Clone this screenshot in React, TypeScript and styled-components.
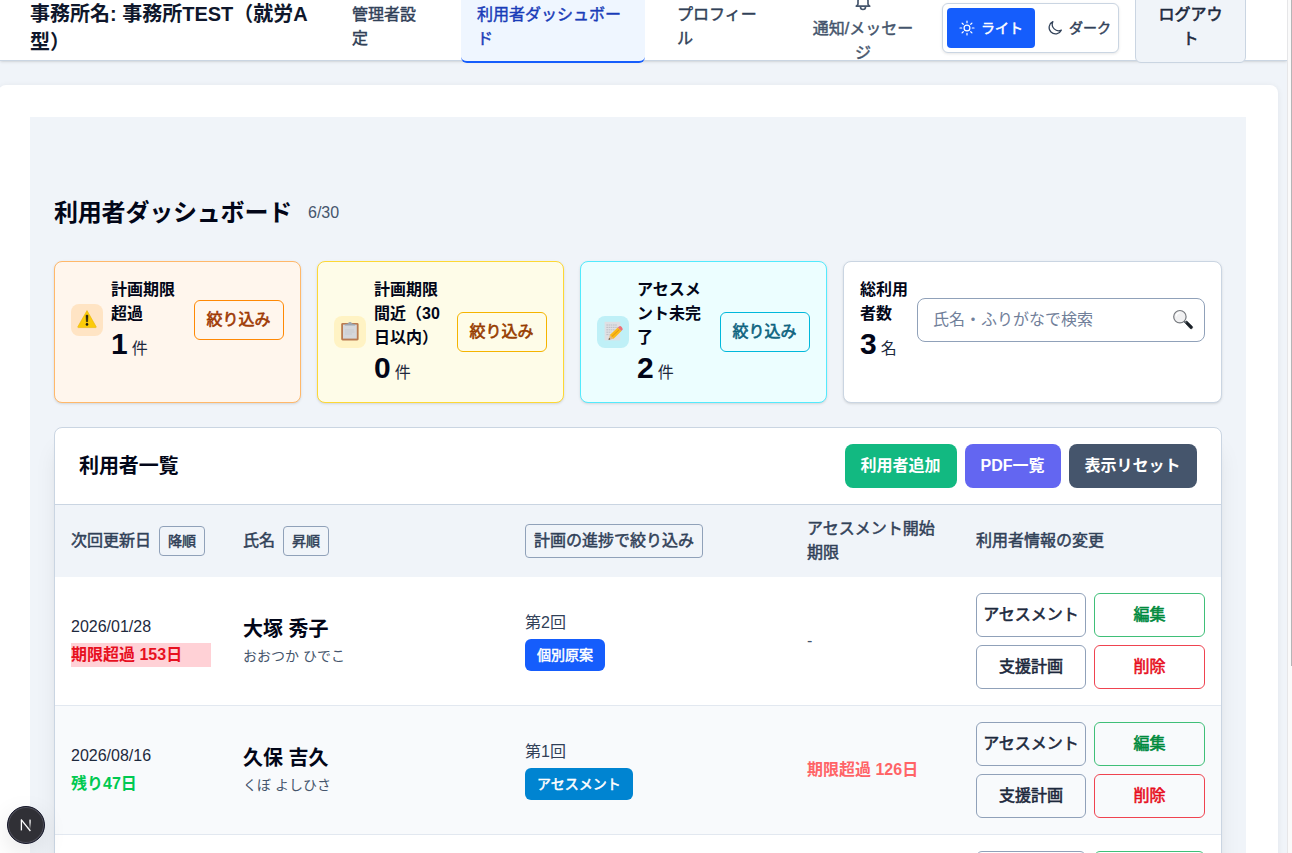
import React from 'react';
import styled, { createGlobalStyle } from 'styled-components';

const GlobalStyle = createGlobalStyle`
  *, *::before, *::after { box-sizing: border-box; }
  body {
    margin: 0;
    overflow: hidden;
    background: #f0f4f9;
    color: #020618;
    font: 400 16px/24px "Liberation Sans", "Noto Sans CJK JP", sans-serif;
  }
  button, input { font: inherit; color: inherit; margin: 0; }
  h1, h2, p { margin: 0; }
  svg { display: block; flex: none; }
`;

const Window = styled.div`
  display: flex;
  height: 853px;
  overflow: hidden;
`;

const Page = styled.div`
  width: 1287px;
  flex: none;
  overflow: hidden;
`;

const ScrollTrack = styled.div`
  flex: 1;
  display: flex;
  justify-content: flex-end;
  background: #fafafa;
  border-left: 1px solid #e6e6e8;
`;

const ScrollThumb = styled.div`
  width: 1px;
  height: 666px;
  background: #b5b5b7;
`;

const Header = styled.header`
  display: flex;
  align-items: center;
  height: 65px;
  margin-top: -4px;
  padding-left: 30px;
  background: #fff;
  border-bottom: 1px solid #cad5e2;
  box-shadow: 0 1px 3px rgba(0, 0, 0, 0.1), 0 1px 2px -1px rgba(0, 0, 0, 0.1);
  white-space: nowrap;
`;

const OfficeName = styled.div`
  width: 306px;
  font-size: 20px;
  line-height: 28px;
  font-weight: 600;
  color: #0f172b;
`;

const Nav = styled.nav`
  display: flex;
  align-items: center;
  gap: 16px;
`;

const NavItem = styled.a<{ $width: number; $active?: boolean }>`
  width: ${(p) => p.$width}px;
  height: 70px;
  padding: 10px 16px 0;
  -webkit-text-stroke: 0.45px currentColor;
  color: ${(p) => (p.$active ? '#193cb8' : '#314158')};
  background: ${(p) => (p.$active ? '#eff6ff' : 'transparent')};
  border-bottom: 2px solid ${(p) => (p.$active ? '#155dfc' : 'transparent')};
  border-radius: 6px;
`;

const Notice = styled.a`
  display: flex;
  flex-direction: column;
  align-items: center;
  gap: 5px;
  width: 134px;
  padding-top: 1px;
  text-align: center;
  color: #45556c;
  span { -webkit-text-stroke: 0.45px currentColor; }
`;

const ThemeSwitch = styled.div`
  display: flex;
  width: 177px;
  height: 50px;
  margin-left: 12px;
  padding: 4px;
  background: #fff;
  border: 1px solid #cad5e2;
  border-radius: 6px;
  box-shadow: 0 1px 3px rgba(0, 0, 0, 0.1);
`;

const ThemeOption = styled.button<{ $active?: boolean }>`
  display: flex;
  align-items: center;
  gap: 6px;
  width: ${(p) => (p.$active ? 88 : 79)}px;
  height: 40px;
  padding: 0 0 0 12px;
  border: 0;
  border-radius: 4px;
  font-size: 14px;
  -webkit-text-stroke: 0.5px currentColor;
  background: ${(p) => (p.$active ? '#155dfc' : 'transparent')};
  color: ${(p) => (p.$active ? '#fff' : '#314158')};
`;

const Logout = styled.button`
  width: 111px;
  height: 70px;
  margin-left: 16px;
  padding: 0 0 2px;
  border: 1px solid #cad5e2;
  border-radius: 6px;
  background: #f0f4f9;
  color: #1d293d;
  -webkit-text-stroke: 0.6px currentColor;
`;

const Shell = styled.main`
  width: 1280px;
  height: 900px;
  margin: 24px 0 0 -2px;
  padding: 32px;
  background: #fff;
  border-radius: 8px;
  box-shadow: 0 1px 6px rgba(15, 23, 43, 0.07);
`;

const Dashboard = styled.div`
  height: 860px;
  padding: 78px 24px 0;
  overflow: hidden;
  background: #f0f4f9;
`;

const TitleRow = styled.div`
  display: flex;
  align-items: center;
  gap: 15px;
  height: 36px;
  margin-bottom: 30px;
  color: #45556c;
`;

const Title = styled.h1`
  font-size: 24px;
  line-height: 36px;
  font-weight: 600;
  letter-spacing: -0.2px;
  color: #020618;
  width: 239px;
  white-space: nowrap;
`;

const Stats = styled.div`
  display: grid;
  grid-template-columns: 247px 247px 247px 379px;
  gap: 16px;
  margin-bottom: 24px;
`;

const tones = {
  orange: { bg: '#fff6ed', border: '#ffb86a', icon: '#ffe4c4', line: '#ff8904', text: '#9f3a05' },
  yellow: { bg: '#fefce8', border: '#fdd835', icon: '#fff3c4', line: '#f5b400', text: '#973c00' },
  cyan: { bg: '#ecfeff', border: '#53eafd', icon: '#bff0f7', line: '#00b8db', text: '#0e647f' },
  plain: { bg: '#fff', border: '#cad5e2', icon: '#fff', line: '#90a1b9', text: '#314158' },
};
type Tone = keyof typeof tones;

const StatCard = styled.section<{ $tone: Tone }>`
  height: 142px;
  padding: 16px;
  border: 1px solid ${(p) => tones[p.$tone].border};
  border-radius: 8px;
  background: ${(p) => tones[p.$tone].bg};
  box-shadow: 0 1px 3px rgba(0, 0, 0, 0.1), 0 1px 2px -1px rgba(0, 0, 0, 0.1);
`;

const StatBody = styled.div`
  display: flex;
  align-items: center;
  justify-content: space-between;
  white-space: nowrap;
`;

const StatLead = styled.div`
  display: flex;
  align-items: center;
  gap: 8px;
`;

const IconTile = styled.div<{ $tone: Tone }>`
  display: grid;
  place-items: center;
  width: 32px;
  height: 32px;
  padding-bottom: 2px;
  border-radius: 8px;
  background: ${(p) => tones[p.$tone].icon};
`;

const StatLabel = styled.div`
  font-weight: 600;
`;

const StatValue = styled.div`
  display: flex;
  align-items: baseline;
  gap: 4px;
  height: 36px;
  line-height: 35px;
  color: #1d293d;
  strong { font-size: 30px; font-weight: 700; color: #020618; }
`;

const FilterButton = styled.button<{ $tone: Tone }>`
  width: 90px;
  height: 40px;
  padding: 0 1px 0 0;
  border: 1px solid ${(p) => tones[p.$tone].line};
  border-radius: 6px;
  background: ${(p) => tones[p.$tone].bg};
  color: ${(p) => tones[p.$tone].text};
  -webkit-text-stroke: 0.6px currentColor;
`;

const SearchField = styled.label`
  display: flex;
  align-items: center;
  justify-content: space-between;
  width: 288px;
  height: 44px;
  padding: 0 10px 0 15px;
  border: 1px solid #90a1b9;
  border-radius: 8px;
  background: #fff;
  input {
    width: 220px;
    padding: 0 0 1px;
    border: 0;
    outline: 0;
    background: none;
  }
  input::placeholder { color: #71809a; opacity: 1; }
`;

const ListCard = styled.section`
  border: 1px solid #cad5e2;
  border-radius: 8px;
  background: #fff;
  box-shadow: 0 20px 25px -5px rgba(0, 0, 0, 0.1), 0 8px 10px -6px rgba(0, 0, 0, 0.1);
`;

const ListHeader = styled.div`
  display: flex;
  align-items: center;
  justify-content: space-between;
  height: 77px;
  padding: 0 24px;
  border-bottom: 1px solid #cad5e2;
  h2 { font-size: 20px; line-height: 28px; font-weight: 600; letter-spacing: -0.1px; }
`;

const Actions = styled.div`
  display: flex;
  gap: 8px;
`;

const SolidButton = styled.button<{ $color: string; $width: number }>`
  width: ${(p) => p.$width}px;
  height: 44px;
  padding: 0 1px 0 0;
  border: 0;
  border-radius: 8px;
  background: ${(p) => p.$color};
  color: #fff;
  font-weight: 600;
  white-space: nowrap;
`;

const Row = styled.div<{ $head?: boolean; $alt?: boolean }>`
  display: grid;
  grid-template-columns: 172px 282px 282px 169px 1fr;
  align-items: center;
  height: ${(p) => (p.$head ? 72 : 129)}px;
  background: ${(p) => (p.$head ? '#f0f4f9' : p.$alt ? '#f8fafc' : '#fff')};
  border-bottom: ${(p) => (p.$head ? '0' : '1px solid #e2e8f0')};
  color: #314158;
  white-space: nowrap;
`;

const Cell = styled.div`
  padding: 0 16px;
`;

const HeadCell = styled(Cell)`
  display: flex;
  align-items: center;
  gap: 8px;
  -webkit-text-stroke: 0.5px currentColor;
`;

const OutlineChip = styled.button<{ $large?: boolean }>`
  width: ${(p) => (p.$large ? 178 : 46)}px;
  height: ${(p) => (p.$large ? 34 : 30)}px;
  padding: 0;
  border: 1px solid #90a1b9;
  border-radius: 4px;
  background: transparent;
  font-size: ${(p) => (p.$large ? 16 : 14)}px;
  line-height: 20px;
`;

const DateText = styled.p`
  margin-bottom: 4px;
  color: #1d293d;
`;

const Remaining = styled.p<{ $over: boolean }>`
  font-weight: 600;
  line-height: 24px;
  color: ${(p) => (p.$over ? '#e7101f' : '#00c951')};
  background: ${(p) => (p.$over ? '#ffd1d6' : 'transparent')};
`;

const PersonName = styled.p`
  margin-bottom: 3px;
  font-size: 20px;
  line-height: 28px;
  font-weight: 600;
  color: #020618;
`;

const Kana = styled.p`
  margin-bottom: 1px;
  font-size: 14px;
  line-height: 20px;
  color: #45556c;
`;

const Round = styled.p`
  margin-bottom: 4px;
`;

const StepBadge = styled.span<{ $color: string }>`
  display: block;
  width: fit-content;
  height: 32px;
  padding: 0 12px;
  border-radius: 6px;
  background: ${(p) => p.$color};
  color: #fff;
  font-size: 14px;
  line-height: 32px;
  -webkit-text-stroke: 0.5px currentColor;
`;

const Deadline = styled.p<{ $over?: boolean }>`
  font-weight: ${(p) => (p.$over ? 600 : 400)};
  color: ${(p) => (p.$over ? '#ff6467' : '#45556c')};
`;

const ButtonGrid = styled.div`
  display: grid;
  grid-template-columns: 110px 111px;
  gap: 8px;
`;

const RowButton = styled.button<{ $line: string; $text: string }>`
  height: 44px;
  padding: 0;
  border: 1px solid ${(p) => p.$line};
  border-radius: 6px;
  background: transparent;
  color: ${(p) => p.$text};
  -webkit-text-stroke: 0.6px currentColor;
`;

const DevBadge = styled.div`
  position: absolute;
  left: 7px;
  top: 806px;
  width: 38px;
  height: 38px;
  display: grid;
  place-items: center;
  border-radius: 50%;
  background: #303036;
  border: 1px solid #15172a;
  box-shadow: inset 0 0 0 1px #50505a, 0 8px 24px rgba(0, 0, 0, 0.1);
`;

const BellIcon = () => (
  <svg width="20" height="20" viewBox="0 0 24 24" fill="none" stroke="currentColor" strokeWidth="2" strokeLinecap="round" strokeLinejoin="round">
    <path d="M15 17h5l-1.405-1.405A2.032 2.032 0 0118 14.158V11a6.002 6.002 0 00-4-5.659V5a2 2 0 10-4 0v.341C7.67 6.165 6 8.388 6 11v3.159c0 .538-.214 1.055-.595 1.436L4 17h5m6 0v1a3 3 0 11-6 0v-1m6 0H9" />
  </svg>
);

const SunIcon = () => (
  <svg width="16" height="16" viewBox="0 0 24 24" fill="none" stroke="currentColor" strokeWidth="1.8" strokeLinecap="round">
    <circle cx="12" cy="12" r="4.4" />
    <path d="M12 1.5v2.6M12 19.9v2.6M1.5 12h2.6M19.9 12h2.6M4.6 4.6l1.8 1.8M17.6 17.6l1.8 1.8M4.6 19.4l1.8-1.8M17.6 6.4l1.8-1.8" />
  </svg>
);

const MoonIcon = () => (
  <svg width="16" height="16" viewBox="0 0 24 24" fill="none" stroke="currentColor" strokeWidth="1.8" strokeLinejoin="round">
    <path d="M21.5 15.2A9.6 9.6 0 0 1 8.8 2.5 9.6 9.6 0 1 0 21.5 15.2Z" />
  </svg>
);

const WarningIcon = () => (
  <svg width="20" height="20" viewBox="0 0 20 20">
    <path d="M10 1.6 19.2 17.8Q19.4 18.6 18.6 18.6H1.4Q.6 18.6.8 17.8Z" fill="#fccb09" stroke="#e9b604" strokeWidth=".6" />
    <path d="M9 6.2h2l-.4 6.6H9.4Z" fill="#1c1a14" stroke="#1c1a14" strokeWidth=".5" />
    <circle cx="10" cy="15.4" r="1.3" fill="#1c1a14" />
  </svg>
);

const ClipboardIcon = () => (
  <svg width="20" height="20" viewBox="0 0 20 20">
    <rect x="1.2" y="2" width="17.4" height="17.4" rx="1.4" fill="#b97a50" />
    <rect x="3" y="3.6" width="13.8" height="14" fill="#d5d7db" />
    <path d="M5 9h9M5 11h9.5M5 13h7" stroke="#c2c5ca" strokeWidth=".6" />
    <path d="M4.8 4.6V3.2L8 2.4a2.2 2.2 0 0 1 4 0l3.2.8v1.4Z" fill="#9da5af" />
  </svg>
);

const MemoIcon = () => (
  <svg width="20" height="20" viewBox="0 0 20 20">
    <rect x="1.6" y=".8" width="15.6" height="18.6" fill="#dedfe3" />
    <path d="M3.4 4h11M3.4 6.4h12M3.4 8.8h9M3.4 11.2h5M3.4 13.6h3" stroke="#b5b8be" strokeWidth=".8" strokeDasharray="1.6 .6" />
    <path d="M5.6 18.8 6.8 14 10.6 17.8Z" fill="#e8b980" />
    <path d="M6.8 14 14.8 6.4 18.4 10 10.6 17.8Z" fill="#fbb917" />
    <path d="M8.6 15.8 16.4 8.4" stroke="#e08b0b" strokeWidth=".9" />
    <path d="m14.8 6.4 1.6-1.2q1.2-.4 2.3.7t.9 2.6L18.4 10Z" fill="#ee7178" />
    <path d="m5.6 18.8.4-1.7 1.3 1.2Z" fill="#333" />
  </svg>
);

const SearchIcon = () => (
  <svg width="22" height="22" viewBox="0 0 22 22">
    <path d="m12.6 13.4 2.2-1.4 5.4 5.2q.9 1.2 0 2.1t-2 .2Z" fill="#1b2128" stroke="#1b2128" strokeWidth=".6" />
    <path d="m11.6 11.8 2.6 2.4" stroke="#5b646b" strokeWidth="1.6" />
    <circle cx="7.9" cy="7.7" r="6.2" fill="#f1f1f2" stroke="#76797e" strokeWidth="1.2" />
    <path d="M4.2 7.4a3.8 3.8 0 0 1 3.5-3.6" stroke="#fff" strokeWidth="1.2" fill="none" />
  </svg>
);

const stats: { tone: Tone; icon: React.ReactNode; label: string[]; value: number }[] = [
  { tone: 'orange', icon: <WarningIcon />, label: ['計画期限', '超過'], value: 1 },
  { tone: 'yellow', icon: <ClipboardIcon />, label: ['計画期限', '間近（30', '日以内）'], value: 0 },
  { tone: 'cyan', icon: <MemoIcon />, label: ['アセスメ', 'ント未完', '了'], value: 2 },
];

const people = [
  { date: '2026/01/28', rest: '期限超過 153日', over: true, name: '大塚 秀子', kana: 'おおつか ひでこ', round: '第2回', step: '個別原案', color: '#155dfc', deadline: '-' },
  { date: '2026/08/16', rest: '残り47日', over: false, name: '久保 吉久', kana: 'くぼ よしひさ', round: '第1回', step: 'アセスメント', color: '#0084d1', deadline: '期限超過 126日' },
];

const RowActions = ({ blank }: { blank?: boolean }) => (
  <ButtonGrid>
    <RowButton $line="#90a1b9" $text="#1d293d">{!blank && 'アセスメント'}</RowButton>
    <RowButton $line="#3fbf78" $text="#008a3e">{!blank && '編集'}</RowButton>
    <RowButton $line="#90a1b9" $text="#1d293d">{!blank && '支援計画'}</RowButton>
    <RowButton $line="#ef4350" $text="#e7101f">{!blank && '削除'}</RowButton>
  </ButtonGrid>
);

export default function App() {
  return (
    <Window>
      <GlobalStyle />
      <Page>
        <Header>
          <OfficeName>事務所名: 事務所TEST（就労A<br />型）</OfficeName>
          <Nav>
            <NavItem $width={109}>管理者設<br />定</NavItem>
            <NavItem $width={184} $active>利用者ダッシュボー<br />ド</NavItem>
            <NavItem $width={119}>プロフィー<br />ル</NavItem>
            <Notice>
              <BellIcon />
              <span>通知/メッセー<br />ジ</span>
            </Notice>
          </Nav>
          <ThemeSwitch>
            <ThemeOption $active><SunIcon />ライト</ThemeOption>
            <ThemeOption><MoonIcon />ダーク</ThemeOption>
          </ThemeSwitch>
          <Logout>ログアウ<br />ト</Logout>
        </Header>
        <Shell>
          <Dashboard>
            <TitleRow>
              <Title>利用者ダッシュボード</Title>
              <span>6/30</span>
            </TitleRow>
            <Stats>
              {stats.map((s) => (
                <StatCard key={s.tone} $tone={s.tone}>
                  <StatBody>
                    <StatLead>
                      <IconTile $tone={s.tone}>{s.icon}</IconTile>
                      <div>
                        {s.label.map((line) => <StatLabel key={line}>{line}</StatLabel>)}
                        <StatValue><strong>{s.value}</strong>件</StatValue>
                      </div>
                    </StatLead>
                    <FilterButton $tone={s.tone}>絞り込み</FilterButton>
                  </StatBody>
                </StatCard>
              ))}
              <StatCard $tone="plain">
                <StatBody>
                  <div>
                    <StatLabel>総利用</StatLabel>
                    <StatLabel>者数</StatLabel>
                    <StatValue><strong>3</strong>名</StatValue>
                  </div>
                  <SearchField>
                    <input placeholder="氏名・ふりがなで検索" />
                    <SearchIcon />
                  </SearchField>
                </StatBody>
              </StatCard>
            </Stats>
            <ListCard>
              <ListHeader>
                <h2>利用者一覧</h2>
                <Actions>
                  <SolidButton $color="#12b981" $width={112}>利用者追加</SolidButton>
                  <SolidButton $color="#6366f1" $width={96}>PDF一覧</SolidButton>
                  <SolidButton $color="#45556c" $width={128}>表示リセット</SolidButton>
                </Actions>
              </ListHeader>
              <Row $head>
                <HeadCell><span>次回更新日</span><OutlineChip>降順</OutlineChip></HeadCell>
                <HeadCell><span>氏名</span><OutlineChip>昇順</OutlineChip></HeadCell>
                <HeadCell><OutlineChip $large>計画の進捗で絞り込み</OutlineChip></HeadCell>
                <HeadCell><span>アセスメント開始<br />期限</span></HeadCell>
                <HeadCell><span>利用者情報の変更</span></HeadCell>
              </Row>
              {people.map((p, i) => (
                <Row key={p.name} $alt={i % 2 === 1}>
                  <Cell>
                    <DateText>{p.date}</DateText>
                    <Remaining $over={p.over}>{p.rest}</Remaining>
                  </Cell>
                  <Cell>
                    <PersonName>{p.name}</PersonName>
                    <Kana>{p.kana}</Kana>
                  </Cell>
                  <Cell>
                    <Round>{p.round}</Round>
                    <StepBadge $color={p.color}>{p.step}</StepBadge>
                  </Cell>
                  <Cell><Deadline $over={p.deadline !== '-'}>{p.deadline}</Deadline></Cell>
                  <Cell><RowActions /></Cell>
                </Row>
              ))}
              <Row>
                <Cell /><Cell /><Cell /><Cell />
                <Cell><RowActions blank /></Cell>
              </Row>
            </ListCard>
          </Dashboard>
        </Shell>
      </Page>
      <ScrollTrack><ScrollThumb /></ScrollTrack>
      <DevBadge>
        <svg width="14" height="14" viewBox="0 0 14 14" fill="none">
          <defs>
            <linearGradient id="stem" x1="0" y1="0" x2="0" y2="14" gradientUnits="userSpaceOnUse">
              <stop offset="0.3" stopColor="#fff" />
              <stop offset="0.8" stopColor="#fff" stopOpacity="0" />
            </linearGradient>
          </defs>
          <line x1="2.4" y1="1.6" x2="2.4" y2="12.4" stroke="#fff" strokeWidth="1.3" />
          <line x1="2.2" y1="1.6" x2="11.4" y2="13" stroke="#fff" strokeWidth="1.3" />
          <rect x="10.4" y="1.6" width="1.3" height="9.6" fill="url(#stem)" />
        </svg>
      </DevBadge>
    </Window>
  );
}
